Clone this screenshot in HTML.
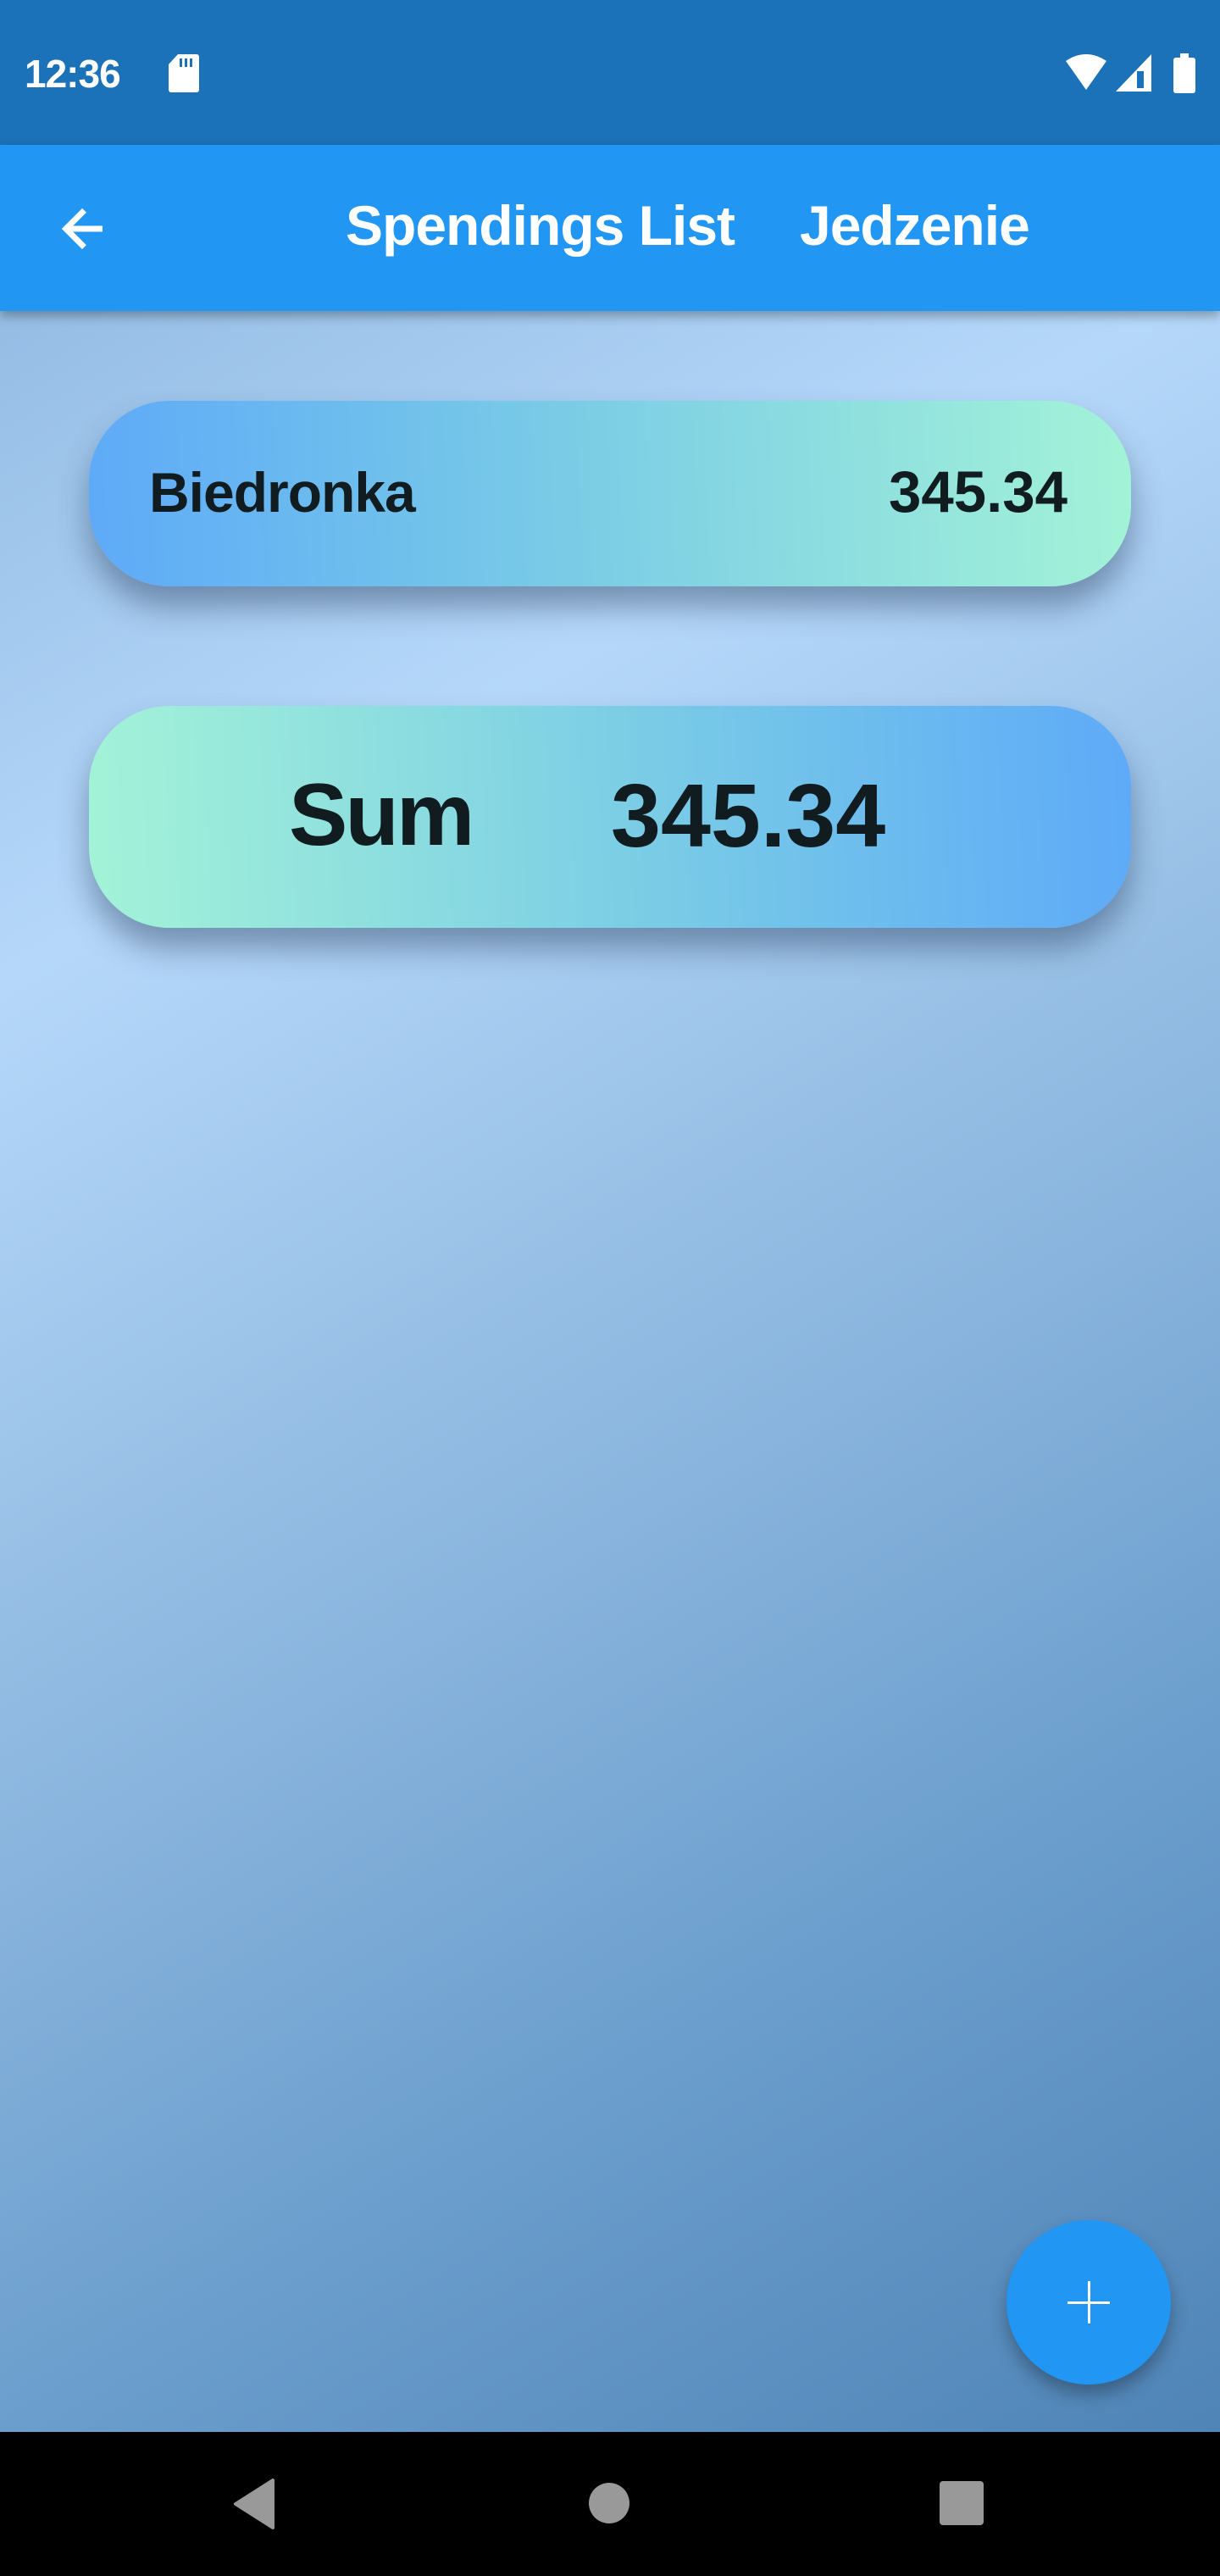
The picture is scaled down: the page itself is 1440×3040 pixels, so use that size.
<!DOCTYPE html>
<html><head><meta charset="utf-8"><style>
*{margin:0;padding:0;box-sizing:border-box}
body{width:1440px;height:3040px;overflow:hidden;font-family:"Liberation Sans",sans-serif;position:relative;
background:linear-gradient(150deg,#86b0da 0%,#b5d8fa 30%,#98c0e6 48%,#6a9dcc 75%,#4a7fb3 100%)}
.status{position:absolute;left:0;top:0;width:1440px;height:171px;background:#1b72b8;color:#fff}
.appbar{position:absolute;left:0;top:171px;width:1440px;height:196px;background:#2196f3;box-shadow:0 6px 12px rgba(0,0,0,.3);color:#fff}
.card{position:absolute;left:105px;width:1230px;border-radius:95px;box-shadow:0 24px 36px rgba(40,60,90,.45)}
.t{position:absolute;font-weight:bold;color:#111c20}
.nav{position:absolute;left:0;top:2870px;width:1440px;height:170px;background:#000}
</style></head><body>
<div class="status">
<div style="position:absolute;left:29px;top:60px;font-size:46px;font-weight:bold;letter-spacing:-1px">12:36</div>
<svg style="position:absolute;left:198px;top:62px" width="38" height="48" viewBox="0 0 38 48"><path d="M12 2H34a3 3 0 0 1 3 3V44a3 3 0 0 1-3 3H4a3 3 0 0 1-3-3V14Z" fill="#fff"/><rect x="14" y="7" width="3" height="10" fill="#1b72b8"/><rect x="20" y="7" width="3" height="10" fill="#1b72b8"/><rect x="26" y="7" width="3" height="10" fill="#1b72b8"/></svg>
<svg style="position:absolute;left:1255px;top:62px" width="160" height="48" viewBox="0 0 160 48"><path d="M3 10Q27 -6 51 10L27 44Z" fill="#fff"/><path d="M104 2V46H62Z" fill="#fff"/><rect x="87" y="22" width="8" height="20" fill="#1b72b8"/><rect x="130" y="6" width="26" height="42" rx="3" fill="#fff"/><rect x="138" y="1" width="10" height="7" fill="#fff"/></svg>
</div>
<div class="appbar">
<svg style="position:absolute;left:62px;top:64px" width="70" height="70" viewBox="0 0 24 24"><path d="M20 11H7.83l5.59-5.59L12 4l-8 8 8 8 1.41-1.41L7.83 13H20v-2z" fill="#fff" stroke="#fff" stroke-width=".4"/></svg>
<div style="position:absolute;left:408px;top:57px;font-size:66px;font-weight:bold;letter-spacing:-1px">Spendings List</div>
<div style="position:absolute;left:944px;top:57px;font-size:66px;font-weight:bold;letter-spacing:-1px">Jedzenie</div>
</div>
<div class="card" style="top:473px;height:219px;background:linear-gradient(88deg,#5eaaf8,#79cbe6 45%,#a3f3d8)">
<div class="t" style="left:71px;top:70px;font-size:66px;letter-spacing:-1px">Biedronka</div>
<div class="t" style="right:75px;top:68px;font-size:69px">345.34</div>
</div>
<div class="card" style="top:833px;height:262px;background:linear-gradient(88deg,#a3f3d8,#79cbe6 55%,#5eaaf8)">
<div class="t" style="left:236px;top:70px;font-size:104px;letter-spacing:-3px">Sum</div>
<div class="t" style="left:616px;top:70px;font-size:106px">345.34</div>
</div>
<div style="position:absolute;left:1188px;top:2620px;width:194px;height:194px;border-radius:50%;background:#2196f3;box-shadow:0 12px 20px rgba(0,0,0,.3)">
<div style="position:absolute;left:95.5px;top:72px;width:3px;height:50px;background:#fff"></div>
<div style="position:absolute;left:72px;top:95.5px;width:50px;height:3px;background:#fff"></div>
</div>
<div class="nav">
<svg style="position:absolute;left:274px;top:55px" width="52" height="60" viewBox="0 0 52 60"><path d="M48 2V58L4 30Z" fill="#999" stroke="#999" stroke-width="4" stroke-linejoin="round"/></svg>
<div style="position:absolute;left:695px;top:60px;width:48px;height:48px;border-radius:50%;background:#999"></div>
<div style="position:absolute;left:1109px;top:58px;width:52px;height:52px;border-radius:4px;background:#999"></div>
</div>
</body></html>
